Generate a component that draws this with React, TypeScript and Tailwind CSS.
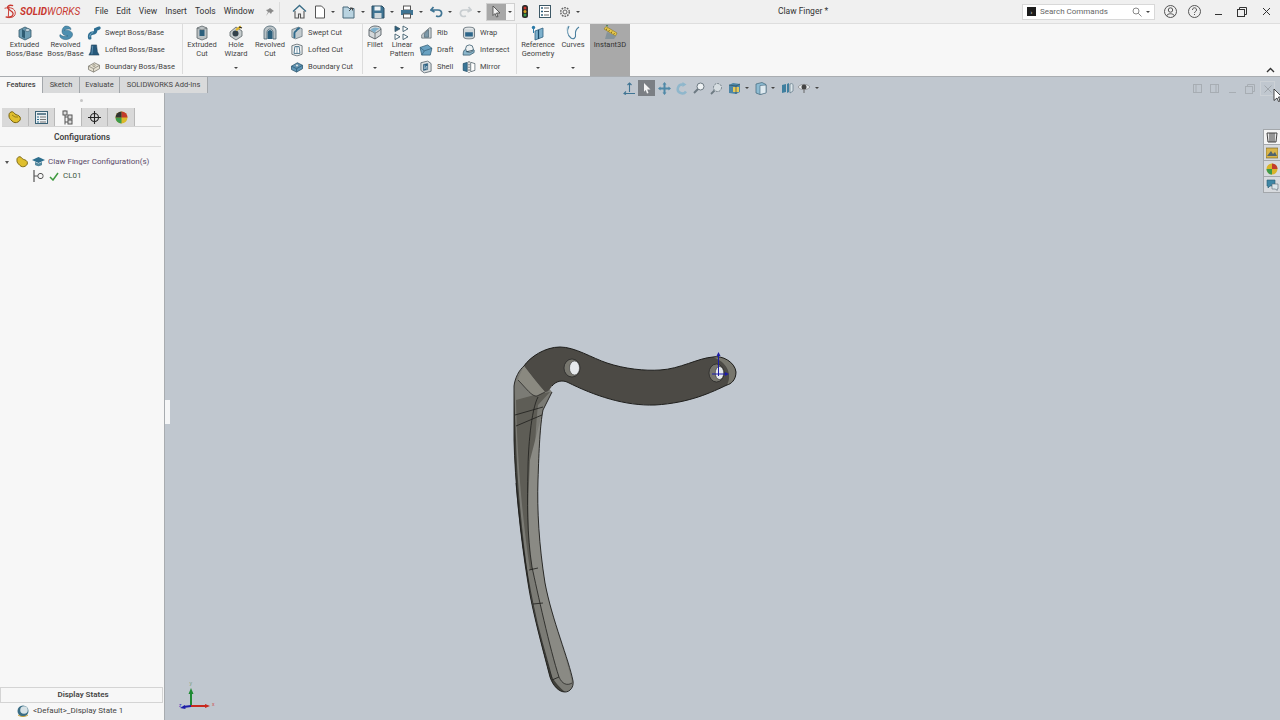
import type { ReactNode } from "react";

function Ic({ s = 16, vb = "0 0 16 16", children }: { s?: number; vb?: string; children: ReactNode }) {
  return (
    <svg width={s} height={s} viewBox={vb} className="block shrink-0" fill="none">
      {children}
    </svg>
  );
}

const Extruded = () => (
  <Ic>
    <path d="M2 5l6-3 6 3v7l-6 3-6-3z" fill="#6d9db3" stroke="#35596b" strokeWidth=".8" />
    <path d="M5 4v8l3 1.500V6z" fill="#2f5d73" />
    <ellipse cx="10.500" cy="5" rx="2.500" ry="1.500" fill="#c6d6de" stroke="#35596b" strokeWidth=".6" />
  </Ic>
);
const Revolved = () => (
  <Ic>
    <path d="M8 1c3 0 5 1.500 5 3.500-3-1-6 0-7 1 3-1 8 0 8.500 3.500.400 3.500-4 6-8 5.500C3.500 14 1 12 2 9.500c2 2 6 2.500 8 1.500-3 0-6-1.500-6-4.500C4 3.500 6 1 8 1z" fill="#4d8fb0" stroke="#2b5f7a" strokeWidth=".5" />
  </Ic>
);
const Swept = () => (
  <Ic>
    <path d="M3 14c-1-4 1-6 4-6s3-2 3-4l4-2" stroke="#2f6f93" strokeWidth="4" strokeLinecap="round" />
    <path d="M3 13c0-3 1-5 4-5.500" stroke="#8ebcd2" strokeWidth="1" />
  </Ic>
);
const Lofted = () => (
  <Ic>
    <path d="M5 2h6l1 8 2 4H2l2-4z" fill="#26587a" stroke="#1b3e57" strokeWidth=".6" />
    <path d="M6.500 3l-1 10" stroke="#6a9cbc" strokeWidth="1" />
  </Ic>
);
const Boundary = () => (
  <Ic>
    <path d="M1.500 7l7-4 6 3v4l-7 4-6-3z" fill="#e6e1d2" stroke="#77756b" strokeWidth=".9" />
    <path d="M1.500 7l6 3 7-4M7.500 10v4" stroke="#77756b" strokeWidth=".8" />
    <circle cx="8" cy="6.200" r="1.500" fill="#cfc9b6" stroke="#77756b" strokeWidth=".5" />
  </Ic>
);
const ExtCut = () => (
  <Ic>
    <path d="M3 3l5-2 5 2v10l-5 2-5-2z" fill="#bcc2c4" stroke="#5c6468" strokeWidth=".8" />
    <rect x="5.500" y="5" width="5" height="6" fill="#2c5f7c" />
    <path d="M3 3l5 2 5-2" stroke="#5c6468" strokeWidth=".6" />
  </Ic>
);
const Hole = () => (
  <Ic>
    <path d="M2 7l6-5 6 4v5l-6 4-6-4z" fill="#c6cccd" stroke="#5c6468" strokeWidth=".8" />
    <circle cx="7.500" cy="8.500" r="3" fill="#33414a" />
    <path d="M8 5l5-3.500" stroke="#e0b52a" strokeWidth="2.200" />
    <path d="M11 2l3 1" stroke="#222" strokeWidth="1.300" />
  </Ic>
);
const RevCut = () => (
  <Ic>
    <path d="M2 14V6c0-3 3-5 6-5s6 2 6 5v8h-3V7c0-1.500-1.500-3-3-3S5 5.500 5 7v7z" fill="#b9c2c6" stroke="#4c6472" strokeWidth=".8" />
    <path d="M5.500 14V7.500C5.500 6 6.500 5 8 5s2.500 1 2.500 2.500V14z" fill="#2c5f7c" />
  </Ic>
);
const SweptCut = () => (
  <Ic>
    <path d="M2 4l8-3 4 2v9l-8 3-4-2z" fill="#c3cbcf" stroke="#586972" strokeWidth=".8" />
    <path d="M5 14V8c0-2 3-2 3-4l3-2" stroke="#2f6a8c" strokeWidth="2.200" />
  </Ic>
);
const LoftCut = () => (
  <Ic>
    <path d="M2 3l6-2 6 2v10l-6 2-6-2z" fill="#eef0f0" stroke="#4d5a60" strokeWidth=".9" />
    <path d="M5.500 4h5l1 8h-7z" fill="#fff" stroke="#33617c" strokeWidth="1" />
    <path d="M8 4v8" stroke="#33617c" strokeWidth=".7" />
  </Ic>
);
const BoundCut = () => (
  <Ic>
    <path d="M1.500 7l7-4 6 3v4l-7 4-6-3z" fill="#5c94b5" stroke="#2a536b" strokeWidth=".9" />
    <path d="M1.500 7l6 3 7-4M7.500 10v4" stroke="#2a536b" strokeWidth=".8" />
    <circle cx="8" cy="6.200" r="1.700" fill="#d7e4ea" stroke="#2a536b" strokeWidth=".5" />
  </Ic>
);
const Fillet = () => (
  <Ic>
    <path d="M2 5c0-2 3-4 6-4s6 1 6 3v6l-6 4-6-3z" fill="#d4d8da" stroke="#565f64" strokeWidth=".9" />
    <path d="M2 5l6 3v6M8 8c2-.500 4-2 6-4" stroke="#565f64" strokeWidth=".8" />
    <path d="M8 8c0-2 2-3 5-4.500L8 2.500C5.500 3 4 4 3.500 5z" fill="#7fb1cc" />
  </Ic>
);
const Pattern = () => (
  <Ic>
    {[
      [1, 1],
      [9, 1],
      [1, 9],
      [9, 9],
    ].map(([x, y]) => (
      <path key={`${x}-${y}`} d={`M${x} ${y}l5 2.800-5 2.800z`} fill={x === 1 && y === 1 ? "#2c5f7c" : "#fff"} stroke="#3d5b6c" strokeWidth=".9" />
    ))}
  </Ic>
);
const Rib = () => (
  <Ic>
    <path d="M3 14V10l9-8h2v12z" fill="#d0d6d8" stroke="#566168" strokeWidth=".9" />
    <path d="M6 13V9l5-5v9z" fill="#7c98a8" stroke="#3c5767" strokeWidth=".7" />
  </Ic>
);
const Draft = () => (
  <Ic>
    <path d="M1 5l9-3 5 4-2 8H3z" fill="#6aa2c2" stroke="#2f5c75" strokeWidth=".9" />
    <path d="M1 5l5 4 9-3M6 9l-3 5" stroke="#2f5c75" strokeWidth=".8" />
  </Ic>
);
const Shell = () => (
  <Ic>
    <path d="M2 3l8-2 4 3v9l-8 2-4-3z" fill="#dde1e3" stroke="#4c5a62" strokeWidth=".9" />
    <path d="M5 5l5-1v7l-5 1z" fill="#2d668a" stroke="#214c66" strokeWidth=".6" />
    <path d="M6.500 6v4.500L9 7v4" stroke="#fff" strokeWidth=".6" />
  </Ic>
);
const Wrap = () => (
  <Ic>
    <ellipse cx="8" cy="3.500" rx="6.500" ry="2.500" fill="#e4e8ea" stroke="#4b5a62" strokeWidth=".9" />
    <path d="M1.500 3.500v9C1.500 14 4.500 15 8 15s6.500-1 6.500-2.500v-9" fill="#cfd6d9" stroke="#4b5a62" strokeWidth=".9" />
    <path d="M3.500 7h9v5h-9z" fill="#2d668a" />
  </Ic>
);
const Intersect = () => (
  <Ic>
    <path d="M1 14c0-4 1-6 3-7l6-2 4 3v3l-5 3z" fill="#8cb7cc" stroke="#33576a" strokeWidth=".9" />
    <circle cx="8.500" cy="6.500" r="4.500" fill="#eef1f2" stroke="#33576a" strokeWidth=".9" />
    <path d="M5 10l7-1.500" stroke="#33576a" strokeWidth="1.200" />
  </Ic>
);
const Mirror = () => (
  <Ic>
    <path d="M1 4l5-1.500v11L1 12z" fill="#3a7597" stroke="#23485f" strokeWidth=".7" />
    <path d="M15 4l-5-1.500v11l5-1.500z" fill="#fff" stroke="#4a5a63" strokeWidth=".9" />
    <path d="M8 1v14" stroke="#333" strokeWidth="1" strokeDasharray="2 1.200" />
  </Ic>
);
const RefGeom = () => (
  <Ic>
    <path d="M5 6l8-3v9l-8 3z" fill="#7eb1cd" stroke="#2e6180" strokeWidth=".8" />
    <path d="M8.500 5v9" stroke="#1c4c6b" strokeWidth="1.200" />
    <circle cx="3.500" cy="2.500" r="1.700" fill="#2c7ba8" />
    <path d="M3.500 4v4" stroke="#2c7ba8" strokeWidth="1" />
  </Ic>
);
const Curves = () => (
  <Ic>
    <path d="M4 1c-2 4-2 9 2 12 3 2 5-1 4.500-3C10 7 11 4 14 2" stroke="#4a7f9e" strokeWidth="1.100" />
    <path d="M2.500 1.500c-1 3 0 6 1 8" stroke="#8eb5c9" strokeWidth=".7" />
  </Ic>
);
const Ruler = () => (
  <Ic>
    <path d="M2 4l2-2.500 11 6.500-1.500 3z" fill="#e8c94c" stroke="#8a7420" strokeWidth=".6" />
    <path d="M5 3.500l-.8 1.500M7.500 5l-.8 1.500M10 6.500l-.8 1.500M12.500 8l-.8 1.500" stroke="#5b4b10" strokeWidth=".7" />
    <path d="M5 7l-2 7h9l2-3" fill="#7c8d96" fillOpacity=".8" />
    <path d="M6 1L4 0" stroke="#3a7c4b" strokeWidth="1" />
  </Ic>
);
const Caret = () => <span className="block h-0 w-0 border-x-[2px] border-t-[2.500px] border-x-transparent border-t-[#444]" />;

function BigBtn({ w, icon, lines, caret }: { w: number; icon?: ReactNode; lines: string[]; caret?: boolean }) {
  return (
    <div className="relative flex h-full flex-col items-center pt-px" style={{ width: w }}>
      <div className="h-[16px]">{icon}</div>
      <div className="flex flex-col items-center text-center leading-[8.500px]">
        {lines.map((l) => (
          <span key={l} className="whitespace-nowrap">
            {l}
          </span>
        ))}
      </div>
      {caret && (
        <div className="absolute left-1/2 top-[43px] -translate-x-1/2">
          <Caret />
        </div>
      )}
    </div>
  );
}

function SmallCol({ items, w }: { items: [ReactNode, string][]; w: number }) {
  return (
    <div className="flex flex-col" style={{ width: w }}>
      {items.map(([icon, label]) => (
        <div key={label} className="flex h-[17px] items-center gap-[4px]">
          <div className="flex w-[14px] justify-center">
            <div className="scale-[.85]">{icon}</div>
          </div>
          <span className="whitespace-nowrap">{label}</span>
        </div>
      ))}
    </div>
  );
}

const Sep = () => <div className="mx-[2px] h-[50px] w-px shrink-0 self-start bg-[#dcdcdc]" />;

function Qa({ children, caret = true, w = 29 }: { children: ReactNode; caret?: boolean; w?: number }) {
  return (
    <div className="flex items-center justify-center gap-[5px]" style={{ width: w }}>
      {children}
      {caret && <Caret />}
    </div>
  );
}

function TopBar() {
  return (
    <div className="flex h-[23px] items-center bg-[#f0f0f0] text-[8.500px] text-[#333]">
      <div className="ml-[3px] flex w-[92px] items-center">
        <svg width="16" height="15" viewBox="0 0 14 14" fill="none" className="shrink-0">
          <path d="M9 1.500C5 .500 3 2 4 4s5 2.500 5 5-3 4-7 3" stroke="#c8372f" strokeWidth="1.200" />
          <path d="M1 4c5-1.500 10 0 10 4.500S5 13 3 12.500M5 2l-.5 10" stroke="#c8372f" strokeWidth=".9" />
        </svg>
        <span className="ml-px text-[10px] font-bold italic text-[#c8372f]">SOLID</span>
        <span className="text-[10px] italic text-[#c8372f]">WORKS</span>
      </div>
      <div className="flex w-[170px] items-center gap-[8px]">
        <span>File</span>
        <span>Edit</span>
        <span>View</span>
        <span>Insert</span>
        <span>Tools</span>
        <span>Window</span>
      </div>
      <svg width="10" height="10" viewBox="0 0 10 10" className="shrink-0">
        <path d="M5 1l4 3-2 1-1 2-2-2-3 4 2-4-2-2 2-.500z" fill="#8a8a8a" />
      </svg>
      <div className="ml-[4px] h-[20px] w-px bg-[#dcdcdc]" />
      <div className="ml-[8px] flex items-center">
        <Qa caret={false} w={22}>
          <svg width="15" height="15" viewBox="0 0 15 15" fill="none">
            <path d="M1 7.500L7.500 1.500 14 7.500" stroke="#3a6d87" strokeWidth="1.300" />
            <path d="M3 7v7h3.500v-4h2v4H12V7" stroke="#555" strokeWidth="1.100" />
          </svg>
        </Qa>
        <Qa>
          <svg width="12" height="14" viewBox="0 0 12 14" fill="none">
            <path d="M1.500 1h6l3 3v9h-9z" fill="#fff" stroke="#555" />
          </svg>
        </Qa>
        <Qa>
          <svg width="14" height="14" viewBox="0 0 14 14" fill="none">
            <path d="M1 2h5l1 1.500h5V13H1z" fill="#b9d3e0" stroke="#49687a" />
            <path d="M7 6l3-3M8 3h2.500v2.500" stroke="#444" />
          </svg>
        </Qa>
        <Qa>
          <svg width="14" height="14" viewBox="0 0 14 14" fill="none">
            <path d="M1 1h10l2 2v10H1z" fill="#3f7493" stroke="#2a4d62" />
            <rect x="3.500" y="1.500" width="6" height="4" fill="#eef3f5" />
            <rect x="3.500" y="8" width="7" height="5" fill="#cfd8dc" />
          </svg>
        </Qa>
        <Qa>
          <svg width="14" height="14" viewBox="0 0 14 14" fill="none">
            <rect x="3.500" y="1" width="7" height="4" fill="#fff" stroke="#555" />
            <rect x="1" y="5" width="12" height="5" fill="#3f7493" />
            <rect x="3.500" y="9" width="7" height="4" fill="#fff" stroke="#555" />
          </svg>
        </Qa>
        <Qa>
          <svg width="13" height="12" viewBox="0 0 13 12" fill="none">
            <path d="M3.500 1L1 4l3.500 2M1.500 4H8c2.500 0 4 1.500 3.500 4S9 11 6 10" stroke="#3f7493" strokeWidth="1.700" />
          </svg>
        </Qa>
        <Qa>
          <svg width="13" height="12" viewBox="0 0 13 12" fill="none">
            <path d="M9.500 1L12 4 8.500 6M11.500 4H5C2.500 4 1 5.500 1.500 8S4 11 7 10" stroke="#c8cdd0" strokeWidth="1.700" />
          </svg>
        </Qa>
        <div className="ml-[2px] flex h-[18px] w-[29px] items-stretch border border-[#d0d0d0] bg-[#f7f7f7]">
          <div className="flex w-[19px] items-center justify-center bg-[#a8a8a8]">
            <svg width="11" height="13" viewBox="0 0 11 13">
              <path d="M2 1l7 7H5.500L7 11.500 5.500 12 4 8.500 2 10.500z" fill="#f2f2f2" stroke="#444" strokeWidth=".8" />
            </svg>
          </div>
          <div className="flex flex-1 items-center justify-center">
            <Caret />
          </div>
        </div>
        <div className="flex w-[20px] justify-center">
          <svg width="8" height="13" viewBox="0 0 8 13">
            <rect x="1" y="0" width="6" height="13" rx="2.500" fill="#2b2b2b" />
            <circle cx="4" cy="3" r="1.500" fill="#c8372f" />
            <circle cx="4" cy="6.500" r="1.500" fill="#d9a321" />
            <circle cx="4" cy="10" r="1.500" fill="#3c9c4a" />
          </svg>
        </div>
        <div className="flex w-[20px] justify-center">
          <svg width="12" height="13" viewBox="0 0 12 13" fill="none">
            <rect x=".5" y=".5" width="11" height="12" fill="#fff" stroke="#3d5866" />
            <path d="M2 3h2M2 6.500h2M2 10h2" stroke="#2c5f7c" strokeWidth="1.500" />
            <path d="M5 3h5M5 6.500h5M5 10h5" stroke="#666" />
          </svg>
        </div>
        <Qa>
          <svg width="12" height="12" viewBox="0 0 12 12" fill="none">
            <circle cx="6" cy="6" r="2" stroke="#666" />
            <circle cx="6" cy="6" r="4.300" stroke="#666" strokeWidth="1.500" strokeDasharray="1.700 1" />
          </svg>
        </Qa>
      </div>
      <div className="flex-1 text-center">Claw Finger *</div>
      <div className="flex h-[16px] w-[133px] items-center border border-[#d8d8d8] bg-white pl-[4px] text-[8px] text-[#666]">
        <span className="flex h-[9px] w-[9px] items-center justify-center bg-[#1d1d1d] text-[6px] leading-none text-white">›</span>
        <span className="ml-[4px] flex-1">Search Commands</span>
        <svg width="10" height="10" viewBox="0 0 10 10" fill="none">
          <circle cx="4" cy="4" r="3" stroke="#888" />
          <path d="M6.200 6.200L9.500 9.500" stroke="#888" />
        </svg>
        <span className="mx-[4px]">
          <Caret />
        </span>
      </div>
      <div className="ml-[3px] flex w-[24px] justify-center">
        <svg width="13" height="13" viewBox="0 0 13 13" fill="none" stroke="#555">
          <circle cx="6.500" cy="6.500" r="6" />
          <circle cx="6.500" cy="5" r="2.200" />
          <path d="M2.500 11c1-3 7-3 8 0" />
        </svg>
      </div>
      <div className="flex w-[24px] justify-center">
        <svg width="13" height="13" viewBox="0 0 13 13" fill="none" stroke="#555">
          <circle cx="6.500" cy="6.500" r="6" />
          <path d="M4.500 5c0-3 4-3 4 0 0 1.500-2 1.500-2 3" />
          <path d="M6.500 9v1" />
        </svg>
      </div>
      <div className="flex w-[24px] justify-center pt-[5px]">
        <div className="h-px w-[7px] bg-[#333]" />
      </div>
      <div className="flex w-[24px] justify-center">
        <svg width="10" height="10" viewBox="0 0 10 10" fill="none" stroke="#333">
          <rect x=".5" y="2.500" width="7" height="7" />
          <path d="M2.500 2.500v-2h7v7h-2" />
        </svg>
      </div>
      <div className="mr-[2px] flex w-[24px] justify-center">
        <svg width="9" height="9" viewBox="0 0 9 9" stroke="#333">
          <path d="M1 1l7 7M8 1L1 8" />
        </svg>
      </div>
    </div>
  );
}

function Ribbon() {
  return (
    <div className="relative flex h-[53px] border-b border-[#a9adb1] bg-[#f7f7f7] pl-[4px] text-[7.500px] text-[#444]">
      <BigBtn w={41} icon={<Extruded />} lines={["Extruded", "Boss/Base"]} />
      <BigBtn w={41} icon={<Revolved />} lines={["Revolved", "Boss/Base"]} />
      <div className="ml-px">
        <SmallCol w={93} items={[[<Swept />, "Swept Boss/Base"], [<Lofted />, "Lofted Boss/Base"], [<Boundary />, "Boundary Boss/Base"]]} />
      </div>
      <Sep />
      <BigBtn w={34} icon={<ExtCut />} lines={["Extruded", "Cut"]} />
      <BigBtn w={34} icon={<Hole />} lines={["Hole", "Wizard"]} caret />
      <BigBtn w={34} icon={<RevCut />} lines={["Revolved", "Cut"]} />
      <div className="ml-[3px]">
        <SmallCol w={70} items={[[<SweptCut />, "Swept Cut"], [<LoftCut />, "Lofted Cut"], [<BoundCut />, "Boundary Cut"]]} />
      </div>
      <Sep />
      <BigBtn w={20} icon={<Fillet />} lines={["Fillet"]} caret />
      <BigBtn w={34} icon={<Pattern />} lines={["Linear", "Pattern"]} caret />
      <SmallCol w={43} items={[[<Rib />, "Rib"], [<Draft />, "Draft"], [<Shell />, "Shell"]]} />
      <SmallCol w={52} items={[[<Wrap />, "Wrap"], [<Intersect />, "Intersect"], [<Mirror />, "Mirror"]]} />
      <Sep />
      <BigBtn w={38} icon={<RefGeom />} lines={["Reference", "Geometry"]} caret />
      <BigBtn w={32} icon={<Curves />} lines={["Curves"]} caret />
      <div className="ml-px h-[52px] w-[40px] bg-[#a9a9a9] text-[#333]">
        <BigBtn w={40} icon={<Ruler />} lines={["Instant3D"]} />
      </div>
      <svg width="9" height="6" viewBox="0 0 9 6" fill="none" className="absolute bottom-[3px] right-[5px]">
        <path d="M1 5l3.500-3.500L8 5" stroke="#333" strokeWidth="1.400" />
      </svg>
    </div>
  );
}

function TabRow() {
  const tab = "flex h-[16px] items-center justify-center border-r border-[#a3a7ab] bg-[#d9dadb]";
  return (
    <div className="flex h-[16px] items-start bg-[#c0c7cf] text-[7.500px] text-[#444]">
      <div className="flex h-[16px] w-[43px] items-center justify-center border-r border-[#a3a7ab] bg-[#f7f7f7] font-medium">Features</div>
      <div className={`${tab} w-[37px]`}>Sketch</div>
      <div className={`${tab} w-[40px]`}>Evaluate</div>
      <div className={`${tab} w-[88px]`}>SOLIDWORKS Add-Ins</div>
      <div className="ml-[413px] mt-[3px] flex h-[16px] items-center">
        <ViewTool />
      </div>
      <div className="ml-auto mr-[5px] mt-[3px] flex h-[17px] items-center">
        <svg width="10" height="10" viewBox="0 0 10 10" fill="none" stroke="#a7adb3"><rect x=".5" y=".5" width="8" height="8" /><path d="M3 .5v8" /></svg>
        <svg width="10" height="10" className="ml-[7px]" viewBox="0 0 10 10" fill="none" stroke="#a7adb3"><rect x=".5" y=".5" width="8" height="8" /><path d="M6 .5v8" /></svg>
        <div className="ml-[9px] mt-[7px] h-px w-[7px] bg-[#a7adb3]" />
        <svg width="10" height="10" className="ml-[9px]" viewBox="0 0 10 10" fill="none" stroke="#a7adb3"><rect x=".5" y="2.500" width="7" height="7" /><path d="M2.500 2.500v-2h7v7h-2" /></svg>
        <div className="ml-[5px] flex h-[15px] w-[15px] items-center justify-center border border-[#ccd1d6]">
          <svg width="8" height="8" viewBox="0 0 8 8" stroke="#a0a6ac"><path d="M.5.500l7 7M7.500.500l-7 7" /></svg>
        </div>
      </div>
    </div>
  );
}

function ViewTool() {
  return (
    <>
      <div className="flex w-[17px] justify-center">
        <svg width="13" height="13" viewBox="0 0 13 13" fill="none" stroke="#3f7493"><path d="M6.500 1v9M4.500 3l2-2 2 2M1 11.500h11M3 9.500l-2 2 2 1" strokeWidth="1.100" /></svg>
      </div>
      <div className="flex h-[16px] w-[17px] items-center justify-center bg-[#7b7f84]">
        <svg width="10" height="12" viewBox="0 0 10 12"><path d="M2 1l6.500 6.500H5.200L6.500 11 5 11.500 3.700 8 2 9.800z" fill="#f4f4f4" /></svg>
      </div>
      <div className="flex w-[19px] justify-center">
        <svg width="13" height="13" viewBox="0 0 13 13" fill="#4f89a8"><path d="M6.500 0l2 2.500h-1v3h3v-1l2.500 2-2.500 2v-1h-3v3h1l-2 2.500-2-2.500h1v-3h-3v1L0 6.500l2.500-2v1h3v-3h-1z" /></svg>
      </div>
      <div className="flex w-[16px] justify-center">
        <svg width="13" height="13" viewBox="0 0 13 13" fill="none"><path d="M10 9.500A4.500 4.500 0 1 1 7 2.500" stroke="#8fb7cc" strokeWidth="2.500" /><path d="M6.500 0l4 2.500-4 2.500z" fill="#8fb7cc" /></svg>
      </div>
      <div className="flex w-[18px] justify-center">
        <svg width="12" height="12" viewBox="0 0 12 12" fill="none"><circle cx="7.500" cy="4.500" r="3.500" fill="#eef2f4" stroke="#6d7a82" /><path d="M5 7l-4 4" stroke="#6d7a82" strokeWidth="2" /></svg>
      </div>
      <div className="flex w-[17px] justify-center">
        <svg width="13" height="13" viewBox="0 0 13 13" fill="none"><circle cx="7.500" cy="5.500" r="4" fill="#d6dde1" stroke="#6d7a82" strokeDasharray="2 1" /><path d="M4.500 8.500L1 12" stroke="#6d7a82" strokeWidth="1.800" /></svg>
      </div>
      <div className="flex w-[18px] justify-center">
        <svg width="13" height="13" viewBox="0 0 13 13"><path d="M1 3l4-2 7 1v8l-4 2-7-1z" fill="#4d86a6" /><path d="M5 5h6v5H5z" fill="#e6c958" /><path d="M1 3l7 1v8M8 4l4-2" stroke="#2f4f60" fill="none" strokeWidth=".7" /></svg>
      </div>
      <div className="ml-[2px] mr-[5px]"><Caret /></div>
      <div className="flex w-[14px] justify-center">
        <svg width="12" height="13" viewBox="0 0 12 13"><path d="M1 2l6-1.500 4 2v8L5 12.500 1 11z" fill="#8dbbd2" stroke="#3f6579" strokeWidth=".7" /><path d="M5 3.500v9l6-1.500v-8z" fill="#dfeaf0" stroke="#3f6579" strokeWidth=".6" /></svg>
      </div>
      <div className="ml-[3px] mr-[5px]"><Caret /></div>
      <div className="flex w-[14px] justify-center">
        <svg width="13" height="12" viewBox="0 0 13 12"><path d="M1 3l4-1v8l-4 1z" fill="#3f7f9f" /><path d="M6 2l2-1v9L6 11z" fill="#3f7f9f" /><path d="M9 2c2-1 3 0 3 1v6l-3 2z" fill="#dce6ea" stroke="#4a6575" strokeWidth=".6" /></svg>
      </div>
      <div className="ml-[3px] flex w-[14px] justify-center">
        <svg width="12" height="12" viewBox="0 0 12 12"><path d="M0 5c3-3.500 9-3.500 12 0-3 3.500-9 3.500-12 0z" fill="#e9ecee" stroke="#666" strokeWidth=".5" /><circle cx="6" cy="5" r="2.500" fill="#444" /><path d="M6 8v3" stroke="#666" /></svg>
      </div>
      <div className="ml-[4px]"><Caret /></div>
    </>
  );
}

function Sidebar() {
  const t = "flex h-[18px] w-[26.600px] items-center justify-center border-r border-[#b9b9b9] bg-[#d9d9d9]";
  return (
    <div className="relative flex h-full w-[165px] shrink-0 flex-col border-r border-[#a8acb0] bg-[#f7f7f7] text-[8px] text-[#444]">
      <div className="mt-[6px] flex justify-center">
        <div className="ml-[-2px] h-[3px] w-[3px] rounded-full bg-[#c5c5c5]" />
      </div>
      <div className="ml-[2px] mt-[6px] flex w-[159px] border-b border-[#d4d4d4]">
        <div className={t}>
          <svg width="13" height="13" viewBox="0 0 13 13"><path d="M3 1c2-1 3 1 4 2s4 1 5 3 0 4-2 5-4 1-6-1-3-3-3-5 0-3 2-4z" fill="#dfbf2e" stroke="#7a6410" /><path d="M4 4l3 2 3 0" fill="none" stroke="#7a6410" strokeWidth=".7" /></svg>
        </div>
        <div className={t}>
          <svg width="13" height="13" viewBox="0 0 13 13" fill="none"><rect x=".5" y=".5" width="12" height="12" fill="#e9eff2" stroke="#3a6175" /><path d="M2 3h9" stroke="#3a6175" strokeWidth="1.500" /><path d="M2 6h2M2 8.500h2M2 11h2" stroke="#2c6b8c" /><path d="M5 6h6M5 8.500h6M5 11h6" stroke="#777" /></svg>
        </div>
        <div className="flex h-[18px] w-[26.600px] items-center justify-center border-r border-[#b9b9b9] bg-[#f7f7f7]">
          <svg width="11" height="15" viewBox="0 0 11 15" fill="none" stroke="#555"><path d="M3 .500v14" /><rect x="1" y="1" width="4" height="4" fill="#ddd" /><rect x="6" y="5" width="4" height="4" fill="#ddd" /><rect x="6" y="10" width="4" height="4" fill="#ddd" /><path d="M3 7h3M3 12h3" /></svg>
        </div>
        <div className={t}>
          <svg width="13" height="13" viewBox="0 0 13 13" fill="none" stroke="#222"><circle cx="6.500" cy="6.500" r="4" strokeWidth="1.100" /><path d="M6.500 0v13M0 6.500h13" strokeWidth="1.100" /></svg>
        </div>
        <div className={t}>
          <svg width="13" height="13" viewBox="0 0 13 13"><circle cx="6.500" cy="6.500" r="6" fill="#dcb92a" /><path d="M6.500 6.500V.5a6 6 0 0 1 6 6z" fill="#c23b2d" /><path d="M6.500 6.500H.5a6 6 0 0 0 6 6z" fill="#3c9a4c" /><path d="M6.500 6.500V.5a6 6 0 0 0-6 6z" fill="#333" /></svg>
        </div>
      </div>
      <div className="mr-[3px] flex h-[20px] items-center justify-center border-b border-[#dadada] pl-[3px] pt-[2px] text-[8.500px] font-semibold">Configurations</div>
      <div className="mt-[8px] flex h-[14px] items-center">
        <span className="ml-[5px] mr-[7px] block h-0 w-0 border-x-[2.500px] border-t-[3px] border-x-transparent border-t-[#555]" />
        <svg width="12" height="12" viewBox="0 0 13 13"><path d="M3 1c2-1 3 1 4 2s4 1 5 3 0 4-2 5-4 1-6-1-3-3-3-5 0-3 2-4z" fill="#dfbf2e" stroke="#7a6410" /></svg>
        <svg width="13" height="12" viewBox="0 0 13 12" className="ml-[4px]"><path d="M0 4l6.500-3L13 4 6.500 7z" fill="#2f6f8e" /><path d="M3 6v3c2 1.500 5 1.500 7 0V6L6.500 7.500z" fill="#55899f" /></svg>
        <span className="ml-[3px] whitespace-nowrap text-[#5a4a6a]">Claw Finger Configuration(s)</span>
      </div>
      <div className="ml-[33px] flex h-[14px] items-center">
        <svg width="12" height="12" viewBox="0 0 12 12" fill="none" stroke="#555"><path d="M1 0v12" strokeWidth="1.200" /><path d="M1 6h4" /><rect x="5" y="3.500" width="5" height="5" rx="2" /></svg>
        <svg width="10" height="9" viewBox="0 0 10 9" fill="none" className="ml-[4px]"><path d="M1 5l3 3 5-7" stroke="#3f9a3f" strokeWidth="1.500" /></svg>
        <span className="ml-[4px] text-[#3f5a3f]">CL01</span>
      </div>
      <div className="flex-1" />
      <div className="flex h-[16px] w-[163px] items-center justify-center border border-[#d4d4d4] pl-[3px] font-semibold">Display States</div>
      <div className="mb-[2px] flex h-[15px] items-center pl-[17px]">
        <svg width="12" height="12" viewBox="0 0 12 12"><circle cx="6" cy="6" r="5.500" fill="#3a6d85" /><circle cx="7" cy="5" r="3.800" fill="#d7e2e6" /><path d="M1 10c3 2 7 2 10 0" stroke="#c9a33a" fill="none" /></svg>
        <span className="ml-[4px] whitespace-nowrap">&lt;Default&gt;_Display State 1</span>
      </div>
    </div>
  );
}

function Model() {
  return (
    <svg width="240" height="360" viewBox="500 340 240 360" fill="none" className="absolute left-[335px] top-[247px]">
      <path
        d="M524 366C519 370 515 378 514 386L514 440C515 480 520 535 528 583C532 610 543 650 550 677C553 686 559 692 565 692C570 692 574 687 573 681C569 660 552 620 545 583C539 545 537 510 538 480C539 450 540 425 543 410L552 392L535 372z"
        fill="#7b7b75"
      />
      <path d="M514 390L514 440C515 480 520 535 528 583C532 610 543 650 550 677C553 686 559 692 565 692C560 688 555 682 552 677C544 650 532 610 529 583C522 535 517 480 516 440z" fill="#3f3f3a" />
      <path d="M516 400C517 450 521 510 530 570L540 569C534 510 533 450 538 405L550 392L538 394z" fill="#5e5d56" />
      <path d="M530 460C528 500 527 535 532 567C537 590 550 650 559 677C563 684 568 686 572 683C568 660 552 620 545 583C539 545 537 510 538 480C539 450 540 425 543 410z" fill="#8a8a84" />
      <path
        d="M524 366C530 357 545 347 560 347C575 347 592 358 607 363C625 369 645 371 660 370C680 369 698 358 713 357C722 355 735 362 736 372C736 380 731 384 727 385C712 392 690 403 655 405C625 406 595 396 567 382C562 380 556 381 552 386C549 391 547 392 545 392C538 384 530 374 524 366z"
        fill="#4c4a45"
      />
      <path d="M524 366C521 372 519 376 518 380C526 388 532 397 537 396L545 392C538 384 530 374 524 366z" fill="#8a8980" />
      <path d="M713 357C722 355 735 362 736 372C736 380 731 384 727 385C731 378 731 364 713 357z" fill="#77766d" />
      <g stroke="#1e1e1c" strokeWidth=".9">
        <path d="M514 386L514 440C515 480 520 535 528 583C532 610 543 650 550 677C553 686 559 692 565 692C570 692 574 687 573 681C569 660 552 620 545 583C539 545 537 510 538 480C539 450 540 425 543 410L552 392" />
        <path d="M524 366C530 357 545 347 560 347C575 347 592 358 607 363C625 369 645 371 660 370C680 369 698 358 713 357C722 355 735 362 736 372C736 380 731 384 727 385C712 392 690 403 655 405C625 406 595 396 567 382C562 380 556 381 552 386" strokeWidth="1" />
        <path d="M524 366C519 370 515 378 514 386" />
        <path d="M518 380C526 388 532 397 537 396L545 392" strokeWidth=".7" />
        <path d="M538 397C531 410 528 450 528 470C527 500 527 535 532 567C537 590 550 650 559 677" strokeWidth=".8" />
        <path d="M516 483C520 530 526 570 533 604C538 630 546 655 552 678" strokeWidth=".7" />
        <path d="M515 415L543 407M516 426L542 415" strokeWidth=".8" />
        <path d="M529 570L538 568M533 604L543 603M552 680L559 677" strokeWidth=".8" />
        <path d="M559 677C562 684 567 686 572 683" strokeWidth=".7" />
      </g>
      <ellipse cx="572" cy="368" rx="8" ry="9" fill="#77766e" stroke="#222" strokeWidth=".7" />
      <ellipse cx="574.500" cy="368" rx="5" ry="7" fill="#e6e9ec" stroke="#222" strokeWidth=".5" />
      <ellipse cx="716.500" cy="373" rx="7.500" ry="9" fill="#77766e" stroke="#222" strokeWidth=".7" />
      <ellipse cx="719.500" cy="373" rx="4.200" ry="6.500" fill="#e6e9ec" stroke="#222" strokeWidth=".5" />
      <path d="M718.500 355V376M712 374H727" stroke="#1d1da8" strokeWidth="1" />
      <path d="M718.500 352l-2 4h4zM729 374l-4-2v4z" fill="#1d1da8" />
    </svg>
  );
}

function Triad() {
  return (
    <svg width="40" height="36" viewBox="178 680 40 36" fill="none" className="absolute bottom-[4px] left-[13px]">
      <path d="M191 706V692" stroke="#1e8a33" strokeWidth="2" />
      <path d="M191 688l-2.500 6h5z" fill="#1e8a33" />
      <path d="M191 706H207" stroke="#c8281e" strokeWidth="2" />
      <path d="M210 706l-5-2v4z" fill="#c8281e" />
      <path d="M191 706L183 707" stroke="#1d1da8" strokeWidth="2.200" />
      <path d="M180 708l5-3 .5 4z" fill="#1d1da8" />
      <text x="212" y="706" fontSize="5" fill="#d04040" fontFamily="'Liberation Sans', sans-serif">x</text>
      <text x="189.500" y="685" fontSize="5" fill="#6f9a6f" fontFamily="'Liberation Sans', sans-serif">y</text>
      <text x="179" y="707" fontSize="5" fill="#2a2ac0" fontFamily="'Liberation Sans', sans-serif">z</text>
    </svg>
  );
}

function TaskPane() {
  const c = "flex h-[16px] w-[17px] items-center justify-center border-b border-l border-[#a3a7ab] bg-[#d7dade]";
  return (
    <div className="absolute right-0 top-[36px] flex flex-col">
      <div className="flex h-[16px] w-[17px] items-center justify-center border-b border-l border-t border-[#a3a7ab] bg-[#f5f5f5]">
        <svg width="12" height="12" viewBox="0 0 12 12" fill="none" stroke="#444"><path d="M1 2h10l-1 9H2z" fill="#e8e8e8" /><path d="M4 2v9M6 2v9M8 2v9" /></svg>
      </div>
      <div className={c}>
        <svg width="12" height="12" viewBox="0 0 12 12"><rect width="12" height="10" y="1" fill="#d9b44a" stroke="#6a5a20" strokeWidth=".6" /><path d="M1 9l4-5 2 3 2-2 2 4z" fill="#50646e" /></svg>
      </div>
      <div className={c}>
        <svg width="12" height="12" viewBox="0 0 12 12"><circle cx="6" cy="6" r="5.500" fill="#d9b42a" /><path d="M6 6V.5a5.500 5.500 0 0 1 5.500 5.500z" fill="#c23b2d" /><path d="M6 6H.5A5.500 5.500 0 0 0 6 11.500z" fill="#3c9a4c" /></svg>
      </div>
      <div className={c}>
        <svg width="13" height="12" viewBox="0 0 13 12"><path d="M1 1h8v6H4l-2 2V7H1z" fill="#3f87a6" stroke="#2a5a70" strokeWidth=".6" /><path d="M6 5h6v5h-1v1.500L9.500 10H6z" fill="#dce6ea" stroke="#5a6a72" strokeWidth=".6" /></svg>
      </div>
    </div>
  );
}

export default function App() {
  return (
    <div className="flex h-[720px] w-[1280px] flex-col overflow-hidden bg-[#c0c7cf] font-['Roboto','Noto_Sans',sans-serif]">
      <TopBar />
      <div className="h-px bg-[#dedede]" />
      <Ribbon />
      <TabRow />
      <div className="flex min-h-0 flex-1">
        <Sidebar />
        <div className="relative flex-1">
          <Model />
          <Triad />
          <TaskPane />
          <div className="absolute left-0 top-[307px] h-[24px] w-[5px] bg-[#f5f6f7]" />
          <svg width="10" height="14" viewBox="0 0 10 14" className="absolute left-[1108px] top-[-5px]">
            <path d="M1 1l8 8H5.500L7 13l-1.500.500L4 10l-3 2.500z" fill="#fff" stroke="#222" strokeWidth=".8" />
          </svg>
        </div>
      </div>
    </div>
  );
}
